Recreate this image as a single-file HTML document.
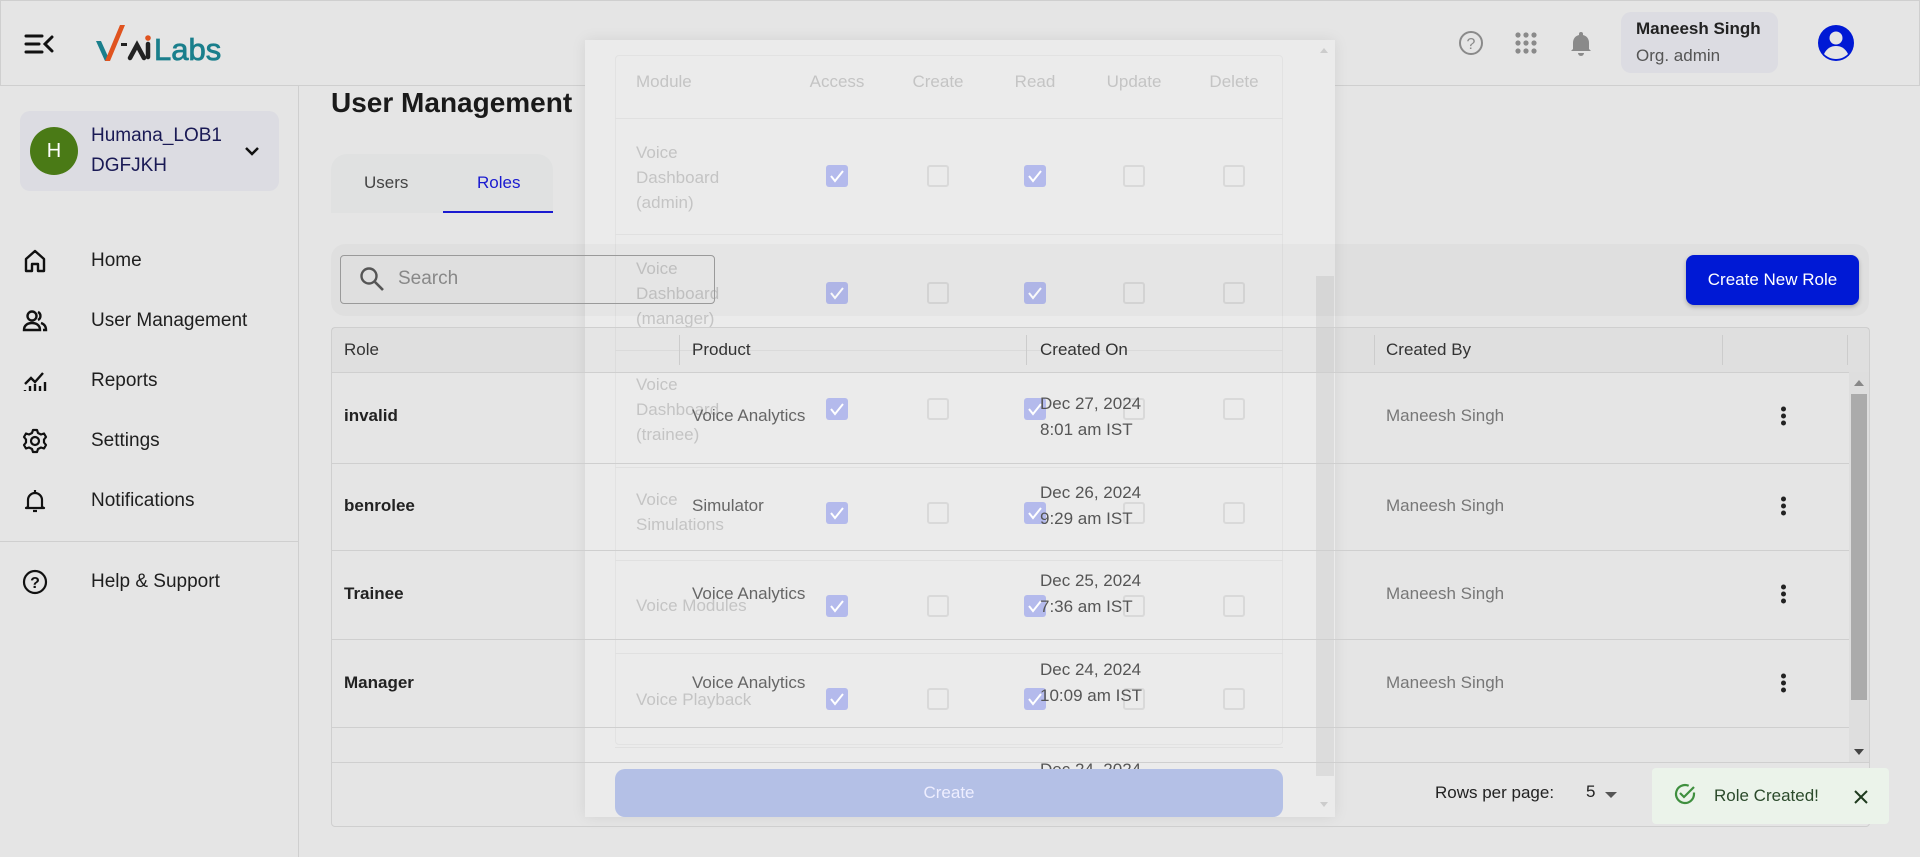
<!DOCTYPE html>
<html><head><meta charset="utf-8"><style>
*{box-sizing:border-box;margin:0;padding:0}
body{width:1920px;height:857px;overflow:hidden;background:#e5e5e5;font-family:"Liberation Sans",sans-serif;position:relative;color:#222}
.a{position:absolute}
.hdr{left:0;top:0;width:1920px;height:86px;border:1px solid #cfcfcf;background:#e5e5e5}
.side{left:0;top:86px;width:299px;height:771px;border-right:1px solid #cfcfcf}
.nav{left:91px;font-size:19px;color:#1e1e1e;transform:translateY(-50%)}
.ic{left:22px;width:26px;height:26px;transform:translateY(-50%)}
.th{font-size:17px;color:#333;top:340px}
.hline{height:1px;background:#cfcfcf;left:331px;width:1518px}
.role{left:344px;font-size:17px;font-weight:bold;color:#222;transform:translateY(-50%)}
.prod{left:692px;font-size:17px;color:#666;transform:translateY(-50%)}
.date{left:1040px;font-size:17px;color:#555;line-height:26px;transform:translateY(-50%)}
.by{left:1386px;font-size:17px;color:#777;transform:translateY(-50%)}
.dots{left:1781px;width:6px;transform:translateY(-50%)}
.dots i{display:block;width:5px;height:5px;border-radius:50%;background:#222;margin:2px 0}
.m{color:#c4c4c4;font-size:17px}
.cb{width:22px;height:22px;border:2px solid #d9d9d9;border-radius:3px;transform:translate(-50%,-50%)}
.cbc{width:22px;height:22px;background:#b4baec;border-radius:3px;transform:translate(-50%,-50%)}
.msep{height:1px;background:#e0e0e0;left:615px;width:668px}
</style></head><body>
<div class="a hdr"></div>
<svg class="a" style="left:24px;top:33px" width="30" height="22" viewBox="0 0 30 22"><path d="M2 3h16M2 11h13M2 19h16M28 4l-7 7 7 7" stroke="#111" stroke-width="3" fill="none" stroke-linecap="round"/></svg>
<svg class="a" style="left:94px;top:22px" width="130" height="42" viewBox="0 0 130 42"><path d="M2 19l9 20h5l-9-20z" fill="#1a7f8c"/><path d="M11 39L26 3h5L16 39z" fill="#e0531f"/><rect x="27" y="21" width="6" height="3" fill="#222"/><path d="M36 36l7-13 7 13M54 22v13" stroke="#222" stroke-width="4.5" fill="none" stroke-linecap="round"/><circle cx="54" cy="16" r="2.8" fill="#e0531f"/><text x="60" y="38" font-size="31" font-family="Liberation Sans" fill="#1a7f8c" stroke="#1a7f8c" stroke-width="0.8">Labs</text></svg>
<svg class="a" style="left:1458px;top:30px" width="26" height="26" viewBox="0 0 26 26"><circle cx="13" cy="13" r="11" stroke="#8a8a8a" stroke-width="2" fill="none"/><text x="13" y="19" text-anchor="middle" font-size="16" fill="#8a8a8a" font-family="Liberation Sans">?</text></svg>
<svg class="a" style="left:1515px;top:32px" width="22" height="22" viewBox="0 0 22 22" fill="#8a8a8a"><circle cx="3" cy="3" r="2.6"/><circle cx="11" cy="3" r="2.6"/><circle cx="19" cy="3" r="2.6"/><circle cx="3" cy="11" r="2.6"/><circle cx="11" cy="11" r="2.6"/><circle cx="19" cy="11" r="2.6"/><circle cx="3" cy="19" r="2.6"/><circle cx="11" cy="19" r="2.6"/><circle cx="19" cy="19" r="2.6"/></svg>
<svg class="a" style="left:1569px;top:30px" width="24" height="26" viewBox="0 0 24 26" fill="#8a8a8a"><path d="M12 2a2 2 0 012 2v1c4 1 6 4 6 8v6l2 2H2l2-2v-6c0-4 2-7 6-8V4a2 2 0 012-2z"/><path d="M9 23h6a3 3 0 01-6 0z"/></svg>
<div class="a" style="left:1621px;top:12px;width:157px;height:61px;background:#dcdce2;border-radius:10px"></div>
<div class="a" style="left:1636px;top:19px;font-size:17px;font-weight:bold;color:#222">Maneesh Singh</div>
<div class="a" style="left:1636px;top:46px;font-size:17px;color:#555">Org. admin</div>
<svg class="a" style="left:1817px;top:24px" width="38" height="38" viewBox="0 0 38 38"><circle cx="19" cy="19" r="18" fill="#0019d5"/><circle cx="19" cy="14" r="6.5" fill="#e5e5e5"/><path d="M7 30c3-6 7-8 12-8s9 2 12 8c-3 3-7 5-12 5s-9-2-12-5z" fill="#e5e5e5"/></svg>

<div class="a side"></div>
<div class="a" style="left:20px;top:111px;width:259px;height:80px;background:#dcdce2;border-radius:10px"></div>
<div class="a" style="left:30px;top:127px;width:48px;height:48px;border-radius:50%;background:#4a7a16;color:#fff;font-size:20px;text-align:center;line-height:48px">H</div>
<div class="a" style="left:91px;top:125px;font-size:19px;color:#1a1a55">Humana_LOB1</div>
<div class="a" style="left:91px;top:155px;font-size:19px;color:#1a1a55">DGFJKH</div>
<svg class="a" style="left:244px;top:145px" width="16" height="12" viewBox="0 0 16 12"><path d="M2 3l6 6 6-6" stroke="#111" stroke-width="2.5" fill="none"/></svg>

<svg class="a ic" style="top:261px" viewBox="0 0 26 26"><path d="M4 23V11l9-8 9 8v12h-6v-7h-6v7z" stroke="#111" stroke-width="2.4" fill="none" stroke-linejoin="round"/></svg>
<div class="a nav" style="top:261px">Home</div>
<svg class="a ic" style="top:321px" viewBox="0 0 26 26"><circle cx="10" cy="8" r="4.5" stroke="#111" stroke-width="2.4" fill="none"/><path d="M2 22c0-5 4-7 8-7s8 2 8 7z" stroke="#111" stroke-width="2.4" fill="none"/><path d="M16 4a4.5 4.5 0 010 8M19 15c3 1 5 3 5 7h-3" stroke="#111" stroke-width="2.4" fill="none"/></svg>
<div class="a nav" style="top:321px">User Management</div>
<svg class="a ic" style="top:381px" viewBox="0 0 26 26"><path d="M3 23v-1M8 23v-5M13 23v-7M18 23v-5M23 23v-9M3 16l6-6 4 4 8-9" stroke="#111" stroke-width="2.4" fill="none"/></svg>
<div class="a nav" style="top:381px">Reports</div>
<svg class="a ic" style="top:441px" viewBox="0 0 26 26"><path d="M11 2h4l1 3 3 1.5 3-1 2 3.5-2 2.5v3l2 2.5-2 3.5-3-1-3 1.5-1 3h-4l-1-3-3-1.5-3 1-2-3.5 2-2.5v-3l-2-2.5 2-3.5 3 1 3-1.5z" stroke="#111" stroke-width="2.2" fill="none" stroke-linejoin="round"/><circle cx="13" cy="13" r="4" stroke="#111" stroke-width="2.2" fill="none"/></svg>
<div class="a nav" style="top:441px">Settings</div>
<svg class="a ic" style="top:501px" viewBox="0 0 26 26"><path d="M13 2v2M6 19v-7a7 7 0 0114 0v7l2 1H4z" stroke="#111" stroke-width="2.2" fill="none" stroke-linejoin="round"/><path d="M11 23h4" stroke="#111" stroke-width="2.2"/></svg>
<div class="a nav" style="top:501px">Notifications</div>
<div class="a" style="left:0;top:541px;width:299px;height:1px;background:#cfcfcf"></div>
<svg class="a ic" style="top:582px" viewBox="0 0 26 26"><circle cx="13" cy="13" r="11" stroke="#111" stroke-width="2.2" fill="none"/><text x="13" y="19" text-anchor="middle" font-size="16" font-weight="bold" fill="#111" font-family="Liberation Sans">?</text></svg>
<div class="a nav" style="top:582px">Help &amp; Support</div>

<!-- modal (beneath page content) -->
<div class="a" style="left:585px;top:40px;width:750px;height:777px;background:#ebebeb;box-shadow:0 0 14px rgba(0,0,0,.08)"></div>
<div class="a" style="left:615px;top:55px;width:668px;height:690px;border:1px solid #e2e2e2;border-radius:4px"></div>
<div class="a m" style="left:636px;top:72px">Module</div>
<div class="a m" style="left:837px;top:72px;transform:translateX(-50%)">Access</div>
<div class="a m" style="left:938px;top:72px;transform:translateX(-50%)">Create</div>
<div class="a m" style="left:1035px;top:72px;transform:translateX(-50%)">Read</div>
<div class="a m" style="left:1134px;top:72px;transform:translateX(-50%)">Update</div>
<div class="a m" style="left:1234px;top:72px;transform:translateX(-50%)">Delete</div>
<div class="a msep" style="top:118px"></div>
<div class="a m" style="left:636px;top:140px;line-height:25px">Voice<br>Dashboard<br>(admin)</div>
<div class="a msep" style="top:234px"></div>
<div class="a m" style="left:636px;top:256px;line-height:25px">Voice<br>Dashboard<br>(manager)</div>
<div class="a msep" style="top:350px"></div>
<div class="a m" style="left:636px;top:372px;line-height:25px">Voice<br>Dashboard<br>(trainee)</div>
<div class="a msep" style="top:467px"></div>
<div class="a m" style="left:636px;top:487px;line-height:25px">Voice<br>Simulations</div>
<div class="a msep" style="top:560px"></div>
<div class="a m" style="left:636px;top:596px">Voice Modules</div>
<div class="a msep" style="top:653px"></div>
<div class="a m" style="left:636px;top:690px">Voice Playback</div>
<div class="a msep" style="top:747px"></div>

<svg width="0" height="0" style="position:absolute"><defs><symbol id="ck" viewBox="0 0 22 22"><path d="M5 11l4 5 8-10" stroke="#fff" stroke-width="2" fill="none"/></symbol></defs></svg>
<div class="a cbc" style="left:837px;top:176px"><svg width="22" height="22"><use href="#ck"/></svg></div>
<div class="a cb" style="left:938px;top:176px"></div>
<div class="a cbc" style="left:1035px;top:176px"><svg width="22" height="22"><use href="#ck"/></svg></div>
<div class="a cb" style="left:1134px;top:176px"></div>
<div class="a cb" style="left:1234px;top:176px"></div>
<div class="a cbc" style="left:837px;top:293px"><svg width="22" height="22"><use href="#ck"/></svg></div>
<div class="a cb" style="left:938px;top:293px"></div>
<div class="a cbc" style="left:1035px;top:293px"><svg width="22" height="22"><use href="#ck"/></svg></div>
<div class="a cb" style="left:1134px;top:293px"></div>
<div class="a cb" style="left:1234px;top:293px"></div>
<div class="a cbc" style="left:837px;top:409px"><svg width="22" height="22"><use href="#ck"/></svg></div>
<div class="a cb" style="left:938px;top:409px"></div>
<div class="a cbc" style="left:1035px;top:409px"><svg width="22" height="22"><use href="#ck"/></svg></div>
<div class="a cb" style="left:1134px;top:409px"></div>
<div class="a cb" style="left:1234px;top:409px"></div>
<div class="a cbc" style="left:837px;top:513px"><svg width="22" height="22"><use href="#ck"/></svg></div>
<div class="a cb" style="left:938px;top:513px"></div>
<div class="a cbc" style="left:1035px;top:513px"><svg width="22" height="22"><use href="#ck"/></svg></div>
<div class="a cb" style="left:1134px;top:513px"></div>
<div class="a cb" style="left:1234px;top:513px"></div>
<div class="a cbc" style="left:837px;top:606px"><svg width="22" height="22"><use href="#ck"/></svg></div>
<div class="a cb" style="left:938px;top:606px"></div>
<div class="a cbc" style="left:1035px;top:606px"><svg width="22" height="22"><use href="#ck"/></svg></div>
<div class="a cb" style="left:1134px;top:606px"></div>
<div class="a cb" style="left:1234px;top:606px"></div>
<div class="a cbc" style="left:837px;top:699px"><svg width="22" height="22"><use href="#ck"/></svg></div>
<div class="a cb" style="left:938px;top:699px"></div>
<div class="a cbc" style="left:1035px;top:699px"><svg width="22" height="22"><use href="#ck"/></svg></div>
<div class="a cb" style="left:1134px;top:699px"></div>
<div class="a cb" style="left:1234px;top:699px"></div>
<div class="a" style="left:1316px;top:276px;width:18px;height:500px;background:#dcdcdc"></div>
<div class="a" style="left:1320px;top:48px;border:4px solid transparent;border-bottom:5px solid #ccc;border-top:0"></div>
<div class="a" style="left:1320px;top:802px;border:4px solid transparent;border-top:5px solid #ccc;border-bottom:0"></div>

<!-- page main content (above modal) -->
<div class="a" style="left:331px;top:87px;font-size:28px;font-weight:bold;color:#1a1a1a">User Management</div>
<div class="a" style="left:331px;top:154px;width:222px;height:59px;background:#e0e1e1;border-radius:16px 16px 0 0"></div>
<div class="a" style="left:364px;top:173px;font-size:17px;color:#444">Users</div>
<div class="a" style="left:477px;top:173px;font-size:17px;color:#1a1ad0">Roles</div>
<div class="a" style="left:443px;top:211px;width:110px;height:2px;background:#1a1ad0"></div>

<div class="a" style="left:331px;top:244px;width:1538px;height:72px;background:rgba(0,20,20,.025);border-radius:14px"></div>
<div class="a" style="left:340px;top:255px;width:375px;height:49px;border:1px solid #9a9a9a;border-radius:4px"></div>
<svg class="a" style="left:359px;top:266px" width="26" height="26" viewBox="0 0 26 26"><circle cx="10" cy="10" r="7.5" stroke="#555" stroke-width="2.4" fill="none"/><path d="M16 16l8 8" stroke="#555" stroke-width="2.6"/></svg>
<div class="a" style="left:398px;top:268px;font-size:19px;color:#888">Search</div>
<div class="a" style="left:1686px;top:255px;width:173px;height:50px;background:#0019d5;border-radius:8px;color:#fff;font-size:17px;text-align:center;line-height:50px;box-shadow:0 2px 4px rgba(0,0,0,.25)">Create New Role</div>

<div class="a" style="left:331px;top:327px;width:1539px;height:500px;border:1px solid #cfcfcf;border-radius:4px"></div>
<div class="a" style="left:332px;top:328px;width:1537px;height:44px;background:rgba(0,20,20,.025)"></div>
<div class="a th" style="left:344px">Role</div>
<div class="a th" style="left:692px">Product</div>
<div class="a th" style="left:1040px">Created On</div>
<div class="a th" style="left:1386px">Created By</div>
<div class="a" style="left:679px;top:335px;width:1px;height:30px;background:#ccc"></div>
<div class="a" style="left:1026px;top:335px;width:1px;height:30px;background:#ccc"></div>
<div class="a" style="left:1374px;top:335px;width:1px;height:30px;background:#ccc"></div>
<div class="a" style="left:1722px;top:335px;width:1px;height:30px;background:#ccc"></div>
<div class="a" style="left:1847px;top:335px;width:1px;height:30px;background:#ccc"></div>
<div class="a hline" style="top:372px"></div>
<div class="a hline" style="top:463px"></div>
<div class="a hline" style="top:550px"></div>
<div class="a hline" style="top:639px"></div>
<div class="a hline" style="top:727px"></div>
<div class="a" style="left:331px;top:762px;width:1539px;height:1px;background:#cfcfcf"></div>
<div class="a" style="left:1849px;top:372px;width:20px;height:390px;background:#dedede"></div>
<div class="a" style="left:1851px;top:394px;width:16px;height:306px;background:#ababab"></div>
<div class="a" style="left:1854px;top:380px;border:5px solid transparent;border-bottom:6px solid #888;border-top:0"></div>
<div class="a" style="left:1854px;top:749px;border:5px solid transparent;border-top:6px solid #444;border-bottom:0"></div>

<div class="a role" style="top:416px">invalid</div>
<div class="a role" style="top:506px">benrolee</div>
<div class="a role" style="top:594px">Trainee</div>
<div class="a role" style="top:683px">Manager</div>
<div class="a prod" style="top:416px">Voice Analytics</div>
<div class="a prod" style="top:506px">Simulator</div>
<div class="a prod" style="top:594px">Voice Analytics</div>
<div class="a prod" style="top:683px">Voice Analytics</div>
<div class="a date" style="top:417px">Dec 27, 2024<br>8:01 am IST</div>
<div class="a date" style="top:506px">Dec 26, 2024<br>9:29 am IST</div>
<div class="a date" style="top:594px">Dec 25, 2024<br>7:36 am IST</div>
<div class="a date" style="top:683px">Dec 24, 2024<br>10:09 am IST</div>
<div class="a by" style="top:416px">Maneesh Singh</div>
<div class="a by" style="top:506px">Maneesh Singh</div>
<div class="a by" style="top:594px">Maneesh Singh</div>
<div class="a by" style="top:683px">Maneesh Singh</div>
<div class="a dots" style="top:416px"><i></i><i></i><i></i></div>
<div class="a dots" style="top:506px"><i></i><i></i><i></i></div>
<div class="a dots" style="top:594px"><i></i><i></i><i></i></div>
<div class="a dots" style="top:683px"><i></i><i></i><i></i></div>

<div class="a" style="left:1435px;top:783px;font-size:17px;color:#222">Rows per page:</div>
<div class="a" style="left:1586px;top:782px;font-size:17px;color:#222">5</div>
<div class="a" style="left:1605px;top:792px;border:6px solid transparent;border-top:6px solid #555;border-bottom:0"></div>

<!-- partial date + create button on top -->
<div class="a" style="left:1040px;top:760px;height:13px;overflow:hidden;font-size:17px;color:#555">Dec 24, 2024</div>
<div class="a" style="left:615px;top:769px;width:668px;height:48px;background:#b4c0e6;border-radius:10px;color:#eef;font-size:17px;text-align:center;line-height:48px">Create</div>

<!-- toast -->
<div class="a" style="left:1652px;top:768px;width:237px;height:56px;background:#ebf3ea;border-radius:4px"></div>
<svg class="a" style="left:1672px;top:781px" width="26" height="26" viewBox="0 0 26 26"><path d="M22 11.5V13a9 9 0 11-5.3-8.2" stroke="#3f8f3f" stroke-width="2.2" fill="none"/><path d="M8 12l4 4 10-10" stroke="#3f8f3f" stroke-width="2.2" fill="none"/></svg>
<div class="a" style="left:1714px;top:786px;font-size:17px;color:#2b4a2b">Role Created!</div>
<svg class="a" style="left:1853px;top:789px" width="16" height="16" viewBox="0 0 16 16"><path d="M2 2l12 12M14 2L2 14" stroke="#1e3a1e" stroke-width="2"/></svg>
</body></html>
